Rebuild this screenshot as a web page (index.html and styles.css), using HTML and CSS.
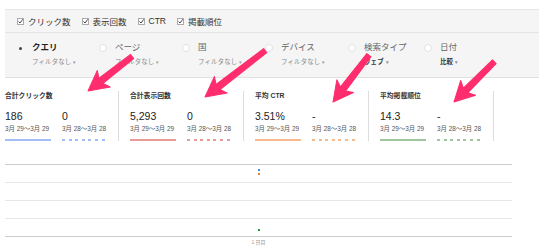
FILE: index.html
```html
<!DOCTYPE html>
<html lang="ja">
<head>
    <meta charset="UTF-8">
    <title>検索アナリティクス</title>
    <link rel="stylesheet" href="styles.css">
</head>
<body>
<div class="page">
    <div class="panel">
        <div class="checks">
            <span class="check"><svg width="7" height="7" viewBox="0 0 7 7"><rect x="0.5" y="0.5" width="6" height="6" fill="#fff" stroke="#aaa"/><polyline points="1.5,3.5 3,5 5.8,1.3" fill="none" stroke="#444" stroke-width="1"/></svg>クリック数</span>
            <span class="check"><svg width="7" height="7" viewBox="0 0 7 7"><rect x="0.5" y="0.5" width="6" height="6" fill="#fff" stroke="#aaa"/><polyline points="1.5,3.5 3,5 5.8,1.3" fill="none" stroke="#444" stroke-width="1"/></svg>表示回数</span>
            <span class="check"><svg width="7" height="7" viewBox="0 0 7 7"><rect x="0.5" y="0.5" width="6" height="6" fill="#fff" stroke="#aaa"/><polyline points="1.5,3.5 3,5 5.8,1.3" fill="none" stroke="#444" stroke-width="1"/></svg>CTR</span>
            <span class="check"><svg width="7" height="7" viewBox="0 0 7 7"><rect x="0.5" y="0.5" width="6" height="6" fill="#fff" stroke="#aaa"/><polyline points="1.5,3.5 3,5 5.8,1.3" fill="none" stroke="#444" stroke-width="1"/></svg>掲載順位</span>
        </div>
        <div class="dims">
            <div class="dim active">
                <span class="radio"></span>
                <div>
                    <div class="dim-name">クエリ</div>
                    <div class="dim-sub">フィルタなし <span class="caret">▾</span></div>
                </div>
            </div>
            <div class="dim">
                <span class="radio"></span>
                <div>
                    <div class="dim-name">ページ</div>
                    <div class="dim-sub">フィルタなし <span class="caret">▾</span></div>
                </div>
            </div>
            <div class="dim">
                <span class="radio"></span>
                <div>
                    <div class="dim-name">国</div>
                    <div class="dim-sub">フィルタなし <span class="caret">▾</span></div>
                </div>
            </div>
            <div class="dim">
                <span class="radio"></span>
                <div>
                    <div class="dim-name">デバイス</div>
                    <div class="dim-sub">フィルタなし <span class="caret">▾</span></div>
                </div>
            </div>
            <div class="dim">
                <span class="radio"></span>
                <div>
                    <div class="dim-name">検索タイプ</div>
                    <div class="dim-sub strong">ウェブ <span class="caret">▾</span></div>
                </div>
            </div>
            <div class="dim">
                <span class="radio"></span>
                <div>
                    <div class="dim-name">日付</div>
                    <div class="dim-sub strong">比較 <span class="caret">▾</span></div>
                </div>
            </div>
        </div>
    </div>

    <div class="metrics">
        <div class="card first">
            <div class="card-title">合計クリック数</div>
            <div class="pair">
                <div class="val"><div class="num">186</div><div class="date">3月 29〜3月 29</div><div class="bar blue"></div></div>
                <div class="val"><div class="num">0</div><div class="date">3月 28〜3月 28</div><div class="bar blue dash"></div></div>
            </div>
        </div>
        <div class="card">
            <div class="card-title">合計表示回数</div>
            <div class="pair">
                <div class="val"><div class="num">5,293</div><div class="date">3月 29〜3月 29</div><div class="bar red"></div></div>
                <div class="val"><div class="num">0</div><div class="date">3月 28〜3月 28</div><div class="bar red dash"></div></div>
            </div>
        </div>
        <div class="card">
            <div class="card-title">平均 CTR</div>
            <div class="pair">
                <div class="val"><div class="num">3.51%</div><div class="date">3月 29〜3月 29</div><div class="bar orange"></div></div>
                <div class="val"><div class="num">-</div><div class="date">3月 28〜3月 28</div><div class="bar orange dash"></div></div>
            </div>
        </div>
        <div class="card last">
            <div class="card-title">平均掲載順位</div>
            <div class="pair">
                <div class="val"><div class="num">14.3</div><div class="date">3月 29〜3月 29</div><div class="bar green"></div></div>
                <div class="val"><div class="num">-</div><div class="date">3月 28〜3月 28</div><div class="bar green dash"></div></div>
            </div>
        </div>
    </div>

    <div class="chart">
        <div class="grid-row top"></div>
        <div class="grid-row"></div>
        <div class="grid-row"></div>
        <div class="grid-row bottom"></div>
        <span class="point blue" style="top: 5px;"></span>
        <span class="point orange" style="top: 9px;"></span>
        <span class="point green" style="top: 65px;"></span>
        <div class="axis-label">1 日目</div>
    </div>

    <!-- 注釈の矢印 -->
    <svg class="arrows" width="550" height="247" viewBox="0 0 550 247">
        <g fill="#ff2d6d" stroke="#ff2d6d" stroke-width="1" stroke-linejoin="round">
            <path transform="translate(88,91) rotate(-38)" d="M0,0 L20,-10.5 L16.5,-3.3 L56,-2.6 L56,2.6 L16.5,3.3 L20,10.5 Z"/>
            <path transform="translate(205,97) rotate(-37.6)" d="M0,0 L20,-10.5 L16.5,-3.3 L76,-2.6 L76,2.6 L16.5,3.3 L20,10.5 Z"/>
            <path transform="translate(333,102) rotate(-52.5)" d="M0,0 L20,-10.5 L16.5,-3.3 L59,-2.6 L59,2.6 L16.5,3.3 L20,10.5 Z"/>
            <path transform="translate(454,102) rotate(-45)" d="M0,0 L20,-10.5 L16.5,-3.3 L57,-2.6 L57,2.6 L16.5,3.3 L20,10.5 Z"/>
        </g>
    </svg>
</div>
</body>
</html>
```

FILE: styles.css
```css
body { margin: 0; background: #fff; font-family: "Liberation Sans", "Noto Sans CJK JP", sans-serif; color: #222; }
.page { position: relative; width: 550px; height: 247px; overflow: hidden; }

.panel { margin: 9px 11px 0 5px; background: #f5f5f5; border-top: 1px solid #e4e4e4; border-bottom: 1px solid #e0e0e0; }
.checks { display: flex; align-items: center; height: 22px; padding-left: 12px; gap: 11px; border-bottom: 1px solid #e4e4e4; font-size: 8.5px; color: #333; }
.check { display: flex; align-items: center; gap: 4px; }
.check svg { display: block; margin-top: 1px; }

.dims { display: grid; grid-template-columns: 83px 83px 83px 83px 76px auto; height: 44px; padding: 8px 0 0 11px; box-sizing: border-box; }
.dim { display: flex; gap: 8px; }
.radio { flex: none; width: 8px; height: 8px; margin-top: 3px; border-radius: 50%; background: #fff; border: 1px solid #e2e2e2; box-sizing: border-box; position: relative; }
.dim.active .radio { background: #f5f5f5; border-color: #f5f5f5; }
.dim.active .radio::after { content: ""; position: absolute; left: 2px; top: 2px; width: 3px; height: 3px; border-radius: 50%; background: #444; }
.dim-name { font-size: 8.5px; line-height: 12px; color: #666; }
.dim.active .dim-name { font-weight: bold; color: #222; }
.dim-sub { margin-top: 4px; font-size: 6.4px; line-height: 10px; color: #888; letter-spacing: 0.2px; }
.dim-sub.strong { font-weight: bold; color: #333; }
.caret { font-size: 5px; color: #999; }

.metrics { display: flex; margin: 13px 0 0 5px; }
.card { width: 113px; padding-left: 11px; border-left: 1px solid #ddd; height: 50px; }
.card.first { padding-left: 0; border-left: none; }
.card.last { border-right: 1px solid #ddd; }
.card-title { font-size: 6.8px; line-height: 10px; font-weight: bold; color: #333; }
.pair { display: flex; gap: 11px; margin-top: 8px; }
.val { width: 46px; }
.num { font-size: 10.5px; line-height: 14px; color: #222; }
.date { margin-top: 1px; font-size: 6.4px; line-height: 9px; color: #555; white-space: nowrap; }
.bar { height: 2px; margin-top: 6px; }
.bar.blue { background: #a4bdf6; }
.bar.red { background: #e99b98; }
.bar.orange { background: #f8b98c; }
.bar.green { background: #9fc69d; }
.bar.dash { background: repeating-linear-gradient(90deg, var(--c) 0 3px, transparent 3px 6.6px); }
.bar.blue.dash { --c: #a4bdf6; }
.bar.red.dash { --c: #e99b98; }
.bar.orange.dash { --c: #f8b98c; }
.bar.green.dash { --c: #9fc69d; }

.chart { position: relative; width: 507px; margin: 23px 0 0 5px; }
.grid-row { height: 17px; border-top: 1px solid #e6e6e6; }
.grid-row.top { border-top-color: #cdcdcd; }
.grid-row.bottom { border-bottom: 1px solid #cdcdcd; }
.point { position: absolute; left: 253px; width: 2px; height: 2px; }
.point.blue { background: #4a86e8; }
.point.orange { background: #f08a35; }
.point.green { background: #1e9e3a; }
.axis-label { text-align: center; font-size: 5px; line-height: 8px; color: #999; margin-top: 1px; }

.arrows { position: absolute; left: 0; top: 0; pointer-events: none; }
```
